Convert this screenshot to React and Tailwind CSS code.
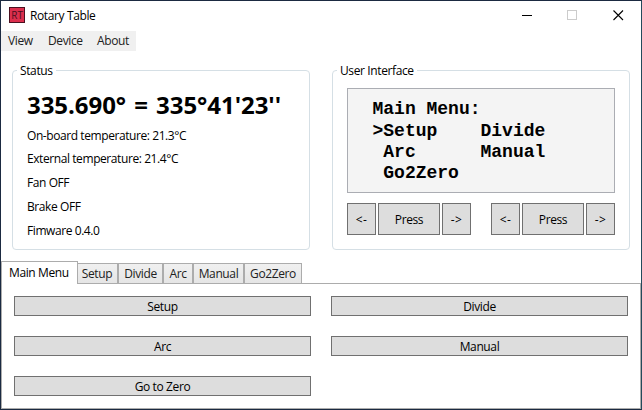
const menus = [
  { label: 'View', cls: 'w-[40px] pl-[7px]' },
  { label: 'Device', cls: 'w-[49px] pl-[7px]' },
  { label: 'About', cls: 'w-[46px] pl-[7px]' },
];

const readings = [
  { text: 'On-board temperature: 21.3°C', cls: 'h-[23px]' },
  { text: 'External temperature: 21.4°C', cls: 'h-[24px]' },
  { text: 'Fan OFF', cls: 'h-[24px]' },
  { text: 'Brake OFF', cls: 'h-[24px]' },
  { text: 'Fimware 0.4.0', cls: 'h-[24px]' },
];

const tabs = [
  { label: 'Setup', cls: 'w-[40px] border-l-0 pr-px' },
  { label: 'Divide', cls: 'w-[45px]' },
  { label: 'Arc', cls: 'w-[30px]' },
  { label: 'Manual', cls: 'w-[51px]' },
  { label: 'Go2Zero', cls: 'w-[58px]' },
];

const actions = ['Setup', 'Divide', 'Arc', 'Manual', 'Go to Zero'];

const lcd = `Main Menu:
>Setup    Divide
 Arc      Manual
 Go2Zero`;

function Button({ className, children }) {
  return (
    <button className={`flex items-center justify-center border border-[#707070] bg-[#dddddd] leading-none ${className}`}>
      {children}
    </button>
  );
}

function Group({ title, children }) {
  return (
    <fieldset className="relative h-[180px] w-[298px] rounded-[4px] border border-[#d5dfe5] px-[14px]">
      <div className="absolute -top-[9px] left-[4px] bg-white px-[3px] leading-[18px]">{title}</div>
      {children}
    </fieldset>
  );
}

function Encoder() {
  return (
    <div className="flex gap-[2px]">
      <Button className="h-[32px] w-[29px] pt-[2px] tracking-[0.3px]">&lt;-</Button>
      <Button className="h-[32px] w-[62px] pt-[2px] tracking-[-0.38px]">Press</Button>
      <Button className="h-[32px] w-[29px] pt-[2px] tracking-[0.3px]">-&gt;</Button>
    </div>
  );
}

export default function App() {
  return (
    <div className="flex h-[410px] w-[642px] flex-col overflow-hidden border border-[#1b2a41] border-r-[#234a5c] bg-white font-['Open_Sans','Noto_Sans',sans-serif] text-[12px] tracking-[-0.38px] text-black">
      <header className="flex h-[30px] shrink-0 items-start">
        <svg className="mt-[6px] ml-[8px]" width="16" height="16" viewBox="0 0 16 16">
          <rect x="0.5" y="0.5" width="15" height="15" fill="#dc2f4d" stroke="#4a1020" />
          <text x="8.2" y="11.6" textAnchor="middle" fontSize="10" fontWeight="500" letterSpacing="0" fill="#4a1020" fontFamily="Open Sans, sans-serif">RT</text>
        </svg>
        <h1 className="mt-[6px] ml-[5px] grow leading-[18px]">Rotary Table</h1>
        <svg className="mt-[9px] mr-[17px]" width="102" height="11" viewBox="0 0 102 11" fill="none">
          <path d="M0 5.5h10" stroke="#000" />
          <rect x="45.5" y="0.5" width="9" height="9" stroke="#cccccc" />
          <path d="M91.5 0.5l9.5 9.5M101 0.5l-9.5 9.5" stroke="#000" strokeWidth="1.1" />
        </svg>
      </header>
      <nav className="flex h-[20px] w-[135px] shrink-0 bg-[#f0f0f0] text-[#212121]">
        {menus.map((m) => (
          <span key={m.label} className={`leading-[20px] ${m.cls}`}>{m.label}</span>
        ))}
      </nav>

      <main className="mt-[19px] flex shrink-0 gap-[22px] pl-[11px]">
        <Group title="Status">
          <div className="mt-[18px] text-[24px] leading-[32px] font-bold tracking-[-0.05px] [word-spacing:2px] whitespace-nowrap">335.690° = 335°41'23''</div>
          <div className="mt-[3px] flex flex-col tracking-[-0.42px]">
            {readings.map((r) => (
              <span key={r.text} className={`leading-[24px] ${r.cls}`}>{r.text}</span>
            ))}
          </div>
        </Group>
        <Group title="User Interface">
          <pre className="mt-[17px] h-[105px] w-[268px] border border-[#abadb3] bg-[#f4f4f4] pt-[10.4px] pl-[24.5px] font-['Liberation_Mono',monospace] text-[18px] leading-[21.3px] font-bold tracking-normal">{lcd}</pre>
          <div className="mt-[10px] flex w-[268px] justify-between">
            <Encoder />
            <Encoder />
          </div>
        </Group>
      </main>

      <section className="mt-[11px] flex grow flex-col">
        <div className="z-10 flex h-[22px] items-end">
          <div className="-mb-px h-[23px] w-[77px] border border-b-0 border-[#acacac] bg-white pl-[7px] leading-[22px]">Main Menu</div>
          {tabs.map((t) => (
            <div key={t.label} className={`flex h-[20px] items-center justify-center border border-b-0 border-[#acacac] bg-linear-to-b from-[#f0f0f0] to-[#e5e5e5] leading-none text-[#212121] ${t.cls}`}>
              {t.label}
            </div>
          ))}
        </div>
        <div className="grid grow grid-cols-[297px_297px] content-start gap-x-[20px] gap-y-[20px] border border-[#acacac] px-[12px] pt-[12px]">
          {actions.map((a) => (
            <Button key={a} className="h-[20px] pt-[2px] tracking-[-0.38px]">{a}</Button>
          ))}
        </div>
      </section>
    </div>
  );
}
